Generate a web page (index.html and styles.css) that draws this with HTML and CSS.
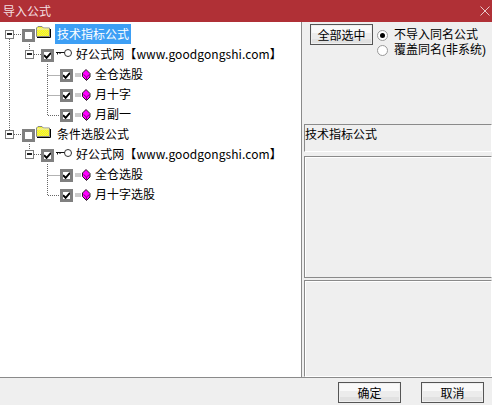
FILE: index.html
```html
<!DOCTYPE html>
<html lang="zh-CN">
<head>
<meta charset="utf-8">
<title>导入公式</title>
<link rel="stylesheet" href="styles.css">
</head>
<body>
<svg class="defs" width="0" height="0" aria-hidden="true">
  <defs>
    <pattern id="dither" width="2" height="2" patternUnits="userSpaceOnUse">
      <rect width="2" height="2" fill="#ffff00"/>
      <rect width="1" height="1" fill="#e6e66a"/>
      <rect x="1" y="1" width="1" height="1" fill="#e6e66a"/>
    </pattern>
    <symbol id="i-check" viewBox="0 0 7 7"><path d="M0 3.2L2.6 5.8L7 .8" stroke="#000" stroke-width="2" fill="none"/></symbol>
    <symbol id="i-folder" viewBox="0 0 15 12"><path d="M.5 10.5V2L2 .5H6L7.5 2H13.5V10.5Z" fill="url(#dither)" stroke="#888"/><path d="M1 2.5H13V3.5H1Z" fill="#f4f0c8"/><path d="M1 11.5H14.5V3" stroke="#000" fill="none"/></symbol>
    <symbol id="i-key" viewBox="0 0 16 8"><circle cx="12" cy="4" r="3.5" fill="#fff" stroke="#333"/><path d="M0 3.5H8.5M1.5 3.5V5.5M4 3.5V5" stroke="#111" fill="none"/></symbol>
    <symbol id="i-gem" viewBox="0 0 16 12"><path d="M0 5H6M0 7H6" stroke="#999"/><path d="M11 .5L15 4.5V8L11.5 11.5L7.5 7.5V4Z" fill="#ff00ff" stroke="#222"/><path d="M8.5 5.5L11.5 8L14.5 5.5M11.5 8V11" stroke="#8a008a" fill="none"/></symbol>
  </defs>
</svg>
<div class="window">
  <header class="titlebar">
    <span>导入公式</span>
    <svg class="close" width="10" height="10" viewBox="0 0 10 10"><path d="M0.5 0.5L9.5 9.5M9.5 0.5L0.5 9.5" stroke="#e9c9ca" stroke-width="1" fill="none"/></svg>
  </header>
  <main class="main">
    <section class="tree">
      <svg class="lines" width="100" height="200" viewBox="0 0 100 200">
        <path d="M9.5 39V130M14 34.5H22M29.5 44V50M34 54.5H41M47.5 64V115.5H60M47.5 75.5H60M47.5 95.5H60M14 134.5H22M29.5 144V150M34 154.5H41M47.5 164V195.5H60M47.5 175.5H60" stroke="#666" stroke-width="1" stroke-dasharray="1 1" fill="none"/>
      </svg>
      <div class="row lv0">
        <span class="expander"></span><span class="cb"></span>
        <svg class="folder" width="15" height="12"><use href="#i-folder"/></svg>
        <span class="label selected">技术指标公式</span>
      </div>
      <div class="row lv1">
        <span class="expander"></span><span class="cb"><svg><use href="#i-check"/></svg></span>
        <svg class="key" width="16" height="8"><use href="#i-key"/></svg>
        <span class="label">好公式网【www.goodgongshi.com】</span>
      </div>
      <div class="row lv2">
        <span class="cb"><svg><use href="#i-check"/></svg></span>
        <svg class="gem" width="16" height="12"><use href="#i-gem"/></svg>
        <span class="label">全仓选股</span>
      </div>
      <div class="row lv2">
        <span class="cb"><svg><use href="#i-check"/></svg></span>
        <svg class="gem" width="16" height="12"><use href="#i-gem"/></svg>
        <span class="label">月十字</span>
      </div>
      <div class="row lv2">
        <span class="cb"><svg><use href="#i-check"/></svg></span>
        <svg class="gem" width="16" height="12"><use href="#i-gem"/></svg>
        <span class="label">月副一</span>
      </div>
      <div class="row lv0">
        <span class="expander"></span><span class="cb"></span>
        <svg class="folder" width="15" height="12"><use href="#i-folder"/></svg>
        <span class="label">条件选股公式</span>
      </div>
      <div class="row lv1">
        <span class="expander"></span><span class="cb"><svg><use href="#i-check"/></svg></span>
        <svg class="key" width="16" height="8"><use href="#i-key"/></svg>
        <span class="label">好公式网【www.goodgongshi.com】</span>
      </div>
      <div class="row lv2">
        <span class="cb"><svg><use href="#i-check"/></svg></span>
        <svg class="gem" width="16" height="12"><use href="#i-gem"/></svg>
        <span class="label">全仓选股</span>
      </div>
      <div class="row lv2">
        <span class="cb"><svg><use href="#i-check"/></svg></span>
        <svg class="gem" width="16" height="12"><use href="#i-gem"/></svg>
        <span class="label">月十字选股</span>
      </div>
    </section>
    <aside class="side">
      <div class="options">
        <button class="btn select-all">全部选中</button>
        <div class="radios">
          <div class="radio-row"><span class="radio on"></span><span>不导入同名公式</span></div>
          <div class="radio-row"><span class="radio"></span><span>覆盖同名(非系统)</span></div>
        </div>
      </div>
      <div class="panel info">技术指标公式</div>
      <div class="panel mid"></div>
      <div class="panel low"></div>
    </aside>
  </main>
  <footer class="footer">
    <button class="btn">确定</button>
    <button class="btn">取消</button>
  </footer>
</div>
</body>
</html>
```
FILE: styles.css
```css
* { box-sizing: border-box; }
html, body { margin: 0; padding: 0; }
body {
  width: 492px;
  height: 405px;
  overflow: hidden;
  background: #efefef;
  font-family: "Noto Sans CJK SC", "Liberation Sans", sans-serif;
  font-size: 12px;
  color: #000;
}
.defs { position: absolute; }
.window { display: flex; flex-direction: column; height: 405px; }
.titlebar {
  height: 22px;
  flex: none;
  background: #b03036;
  color: #f3dfe0;
  display: flex;
  align-items: center;
  justify-content: space-between;
  padding: 0 2px 0 3px;
  line-height: 12px;
}
.main { display: flex; height: 356px; flex: none; border-bottom: 1px solid #8a8a8a; }
.tree {
  position: relative;
  width: 302px;
  flex: none;
  background: #fff;
  border-right: 1px solid #8a8a8a;
  padding-top: 2px;
}
.lines { position: absolute; left: 0; top: -22px; pointer-events: none; }
.row { display: flex; align-items: center; height: 20px; position: relative; }
.lv0 { padding-left: 5px; }
.lv1 { padding-left: 25px; }
.lv2 { padding-left: 60px; }
.expander {
  width: 9px;
  height: 9px;
  flex: none;
  border: 1px solid #7a7a7a;
  background: #fff;
  position: relative;
}
.expander::after {
  content: "";
  position: absolute;
  left: 1px;
  top: 2px;
  width: 5px;
  height: 2px;
  background: #222;
}
.lv0 .expander { margin-right: 8px; }
.lv1 .expander { margin-right: 7px; }
.cb {
  width: 13px;
  height: 13px;
  flex: none;
  border: 3px solid #808080;
  background: #fff;
  display: block;
  margin-top: 2px;
}
.cb svg { display: block; width: 7px; height: 7px; }
.folder { flex: none; margin: -5px 0 0 1px; }
.key { flex: none; margin: -3px 0 0 2px; }
.gem { flex: none; margin: 2px 0 0 2px; }
.label { white-space: nowrap; line-height: 20px; height: 20px; padding: 0 2px; }
.lv0 .label { margin-left: 4px; }
.lv1 .label { margin-left: 2px; letter-spacing: .08px; }
.lv2 .label { margin-left: 2px; }
.selected { background: #3d9ff5; color: #fff; }
.side { flex: 1; padding: 2px 0 0 2px; display: flex; flex-direction: column; min-width: 0; }
.options { display: flex; height: 100px; flex: none; padding-left: 6px; align-items: flex-start; }
.btn {
  width: 63px;
  height: 21px;
  padding: 0;
  font: inherit;
  color: #000;
  line-height: 15px;
  border: 1px solid #555;
  background: linear-gradient(#f9f9f9 0, #f9f9f9 40%, #ececec 40%, #ececec 75%, #e1e1e1 75%);
  box-shadow: inset 0 0 0 1px #efefef;
}
.radios { margin-left: 4px; padding-top: 4px; display: flex; flex-direction: column; }
.radio-row {
  display: flex;
  align-items: center;
  height: 15px;
  gap: 6px;
  line-height: 15px;
  white-space: nowrap;
  font-family: "Liberation Sans", "Noto Sans CJK SC", sans-serif;
}
.radio {
  width: 11px;
  height: 11px;
  flex: none;
  border-radius: 50%;
  background: #fff;
  border: 1px solid #999;
  position: relative;
}
.radio.on::after {
  content: "";
  position: absolute;
  left: 2px;
  top: 2px;
  width: 5px;
  height: 5px;
  border-radius: 50%;
  background: #000;
}
.panel {
  flex: none;
  border-top: 1px solid #8a8a8a;
  border-left: 1px solid #8a8a8a;
  border-right: 1px solid #fff;
  border-bottom: 1px solid #fff;
  box-shadow: inset 1px 1px 0 #fff;
}
.info { height: 28px; line-height: 18px; box-shadow: none; }
.mid { height: 122px; margin-top: 4px; border-bottom: 1px solid #8a8a8a; }
.low { height: 97px; margin-top: 2px; }
.footer { flex: 1; display: flex; justify-content: flex-end; gap: 20px; padding: 4px 8px 0 0; align-items: flex-start; }
```
